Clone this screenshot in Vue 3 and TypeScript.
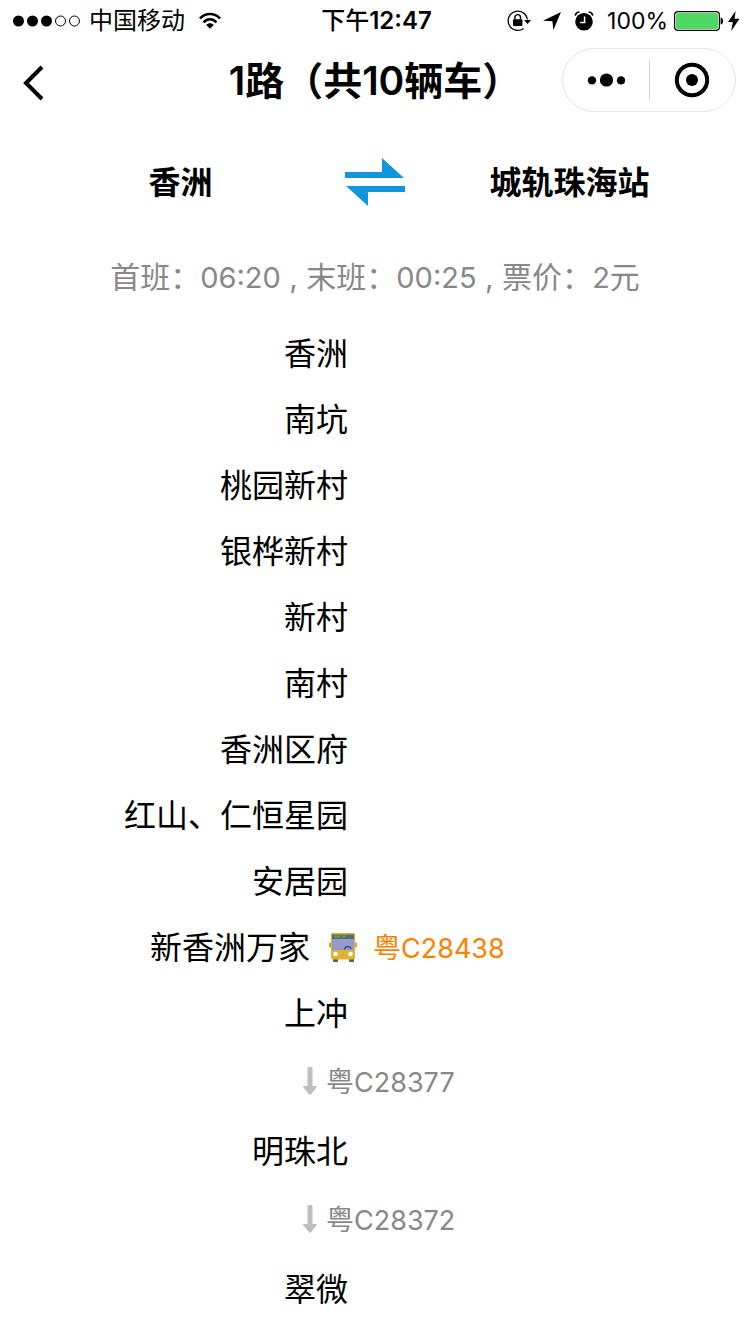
<script setup lang="ts">
import { ref } from 'vue'

interface Stop {
  name: string
  arrived?: string
  leaving?: string
}

const region = '粤'

const stops: Stop[] = [
  { name: '香洲' },
  { name: '南坑' },
  { name: '桃园新村' },
  { name: '银桦新村' },
  { name: '新村' },
  { name: '南村' },
  { name: '香洲区府' },
  { name: '红山、仁恒星园' },
  { name: '安居园' },
  { name: '新香洲万家', arrived: 'C28438' },
  { name: '上冲', leaving: 'C28377' },
  { name: '明珠北', leaving: 'C28372' },
  { name: '翠微' },
]

const from = ref('香洲')
const to = ref('城轨珠海站')

function swap() {
  const start = from.value
  from.value = to.value
  to.value = start
}
</script>

<template>
  <div class="page">
    <div class="status">
      <div class="status-side">
        <svg class="signal" width="68" height="12" viewBox="0 0 68 12" aria-hidden="true">
          <circle cx="5.5" cy="6" r="5.5" />
          <circle cx="19.5" cy="6" r="5.5" />
          <circle cx="33.5" cy="6" r="5.5" />
          <circle cx="47.5" cy="6" r="5" fill="none" stroke="#000" />
          <circle cx="61.5" cy="6" r="5" fill="none" stroke="#000" />
        </svg>
        <span class="carrier">中国移动</span>
        <svg class="wifi" width="24" height="18" viewBox="0 0 26 20" fill="none" stroke="#000" stroke-width="2.8" aria-hidden="true">
          <path d="M1.8 7.2 C8 .4 18 .4 24.2 7.2" />
          <path d="M5.8 11.4 C10 7 16 7 20.2 11.4" />
          <path d="M13 18.6 L8.8 14.4 C11.2 12 14.8 12 17.2 14.4 Z" fill="#000" stroke="none" />
        </svg>
      </div>
      <span class="time">下午<b>12:47</b></span>
      <div class="status-side status-right">
        <svg width="24" height="22" viewBox="0 0 24 22" aria-hidden="true">
          <path d="M16.6 18.4 A9.6 9.6 0 1 1 20.3 9.5" fill="none" stroke="#000" stroke-width="1.3" />
          <path d="M17 10 H24 L20.5 14 Z" />
          <rect x="6" y="9.2" width="9.4" height="6.8" rx="1" />
          <path d="M7.9 9.5 V7.4 a2.8 2.8 0 0 1 5.6 0 V9.5" fill="none" stroke="#000" stroke-width="1.4" />
        </svg>
        <svg class="location" width="18" height="18" viewBox="0 0 18 18" aria-hidden="true">
          <path d="M18 0 L10.4 18 L9.4 9.2 L0 8.8 Z" />
        </svg>
        <svg class="alarm" width="20" height="20" viewBox="0 0 20 20" aria-hidden="true">
          <circle cx="10" cy="10.8" r="8.8" />
          <path d="M1.2 4.6 C1.6 2.4 3.2 1.2 5.4 1 M18.8 4.6 C18.4 2.4 16.8 1.2 14.6 1" fill="none" stroke="#000" stroke-width="1.6" />
          <path d="M10.6 5.6 V11.4 H6.2" fill="none" stroke="#fff" stroke-width="1.5" />
        </svg>
        <span class="percent">100%</span>
        <svg class="battery" width="50" height="20" viewBox="0 0 50 20" aria-hidden="true">
          <rect x=".6" y=".6" width="44.8" height="18.8" rx="3.4" fill="#fff" stroke="#000" stroke-width="1.2" />
          <rect x="2" y="2" width="42" height="16" rx="2" fill="#4cd964" />
          <path d="M46.6 6.4 C50 7 50 13 46.6 13.6 Z" />
        </svg>
        <svg class="bolt" width="12" height="20" viewBox="0 0 12 20" aria-hidden="true">
          <path d="M7.6 0 L0 11 H4.8 L3.2 20 L11.6 7.8 H6.6 Z" />
        </svg>
      </div>
    </div>

    <header class="nav">
      <button class="back" type="button" aria-label="返回">
        <svg width="22" height="36" viewBox="0 0 22 36" fill="none" stroke="#000" stroke-width="4">
          <path d="M19 2 L3 18 L19 34" />
        </svg>
      </button>
      <h1>1路（共10辆车）</h1>
      <div class="capsule">
        <button type="button" aria-label="更多">
          <svg width="38" height="14" viewBox="0 0 38 14">
            <circle cx="5" cy="7.4" r="4.2" />
            <circle cx="19.5" cy="7" r="6.6" />
            <circle cx="34" cy="7.4" r="4.2" />
          </svg>
        </button>
        <button type="button" aria-label="关闭">
          <svg width="36" height="36" viewBox="0 0 36 36">
            <circle cx="18" cy="18" r="15.2" fill="none" stroke="#000" stroke-width="4" />
            <circle cx="18" cy="18" r="6" />
          </svg>
        </button>
      </div>
    </header>

    <main>
      <section class="route">
        <strong>{{ from }}</strong>
        <button class="swap" type="button" aria-label="换向" @click="swap">
          <svg width="60" height="48" viewBox="0 0 60 48" fill="#1296db">
            <path d="M0 14 H37 V0 L59 20 H0 Z" />
            <path d="M60 28 H1 L23 48 V34 H60 Z" />
          </svg>
        </button>
        <strong>{{ to }}</strong>
      </section>

      <p class="info">首班：<span>06:20</span> , 末班：<span>00:25</span> , 票价：<span>2</span>元</p>

      <ul class="stops">
        <li v-for="stop in stops" :key="stop.name">
          <div class="stop" :class="{ arrived: stop.arrived }">
            <span class="name">{{ stop.name }}</span>
            <template v-if="stop.arrived">
              <svg class="bus" width="28" height="30" viewBox="0 0 28 30" aria-hidden="true">
                <rect x="4" y="24" width="5" height="5" rx="1" fill="#47606b" />
                <rect x="20" y="24" width="5" height="5" rx="1" fill="#47606b" />
                <path d="M0 9.5 H28 V13 a1.5 1.5 0 0 1-1.5 1.5 H1.5 A1.5 1.5 0 0 1 0 13 Z" fill="#dba52f" />
                <path d="M3 0 H25 a1 1 0 0 1 1 1 V24.5 a2 2 0 0 1-2 2 H4 a2 2 0 0 1-2-2 V1 a1 1 0 0 1 1-1 Z" fill="#e3b132" />
                <rect x="3" y="1.5" width="22" height="4.5" fill="#56696f" />
                <path d="M5 3.5 H11.5 M13 3.5 H17" stroke="#59a846" stroke-width="2" />
                <rect x="3" y="6" width="22" height="11" fill="#949bca" />
                <path d="M15.5 16.5 C16 12.5 21 12.5 22 16" fill="none" stroke="#3f4c8f" stroke-width="1.5" />
                <circle cx="6.5" cy="21" r="2.3" fill="#fff" />
                <circle cx="21.5" cy="21" r="2.3" fill="#fff" />
              </svg>
              <span class="plate">{{ region }}<span>{{ stop.arrived }}</span></span>
            </template>
          </div>
          <div v-if="stop.leaving" class="moving">
            <svg width="14" height="28" viewBox="0 0 14 28" fill="#bfbfbf" aria-hidden="true">
              <path d="M4.5 1 a1 1 0 0 1 1-1 H8.5 a1 1 0 0 1 1 1 V19 H13 q1.5 .2 .6 1.6 L8 27.3 q-1 1-2 0 L.4 20.6 Q-.5 19.2 1 19 H4.5 Z" />
            </svg>
            <span class="plate">{{ region }}<span>{{ stop.leaving }}</span></span>
          </div>
        </li>
      </ul>
    </main>
  </div>
</template>

<style>
body {
  margin: 0;
  background: #fff;
}
</style>

<style scoped>
.page {
  font-family: Inter, "Noto Sans CJK SC", sans-serif;
  color: #000;
}

svg {
  display: block;
  flex: none;
}

button {
  display: flex;
  align-items: center;
  justify-content: center;
  padding: 0;
  border: 0;
  background: none;
}

.status {
  display: grid;
  grid-template-columns: 1fr auto 1fr;
  align-items: center;
  height: 40px;
  padding: 0 10px 0 13px;
  font-size: 24px;
  line-height: 42px;
}

.status-side {
  display: flex;
  align-items: center;
}

.status-right {
  justify-content: flex-end;
}

.carrier {
  margin: 0 13px 0 8px;
}

.time {
  font-weight: 500;
}

.time b {
  font-weight: 600;
}

.location {
  margin-left: 12px;
}

.alarm {
  margin: 0 13px;
}

.percent {
  font-size: 23px;
}

.battery {
  margin: 0 4px 0 6px;
}

.nav {
  display: grid;
  grid-template-columns: 174px 1fr 174px;
  align-items: center;
  height: 80px;
  padding: 0 14px;
}

.back {
  width: 40px;
  height: 64px;
  padding-top: 6px;
}

h1 {
  margin: 0;
  padding-top: 2px;
  font-size: 39px;
  line-height: 48px;
  font-weight: 600;
  text-align: center;
  white-space: nowrap;
}

.capsule {
  display: flex;
  align-items: center;
  height: 64px;
  box-sizing: border-box;
  border: 1px solid #e5e5e5;
  border-radius: 32px;
}

.capsule button {
  flex: 1;
  height: 38px;
}

.capsule button + button {
  border-left: 1px solid #ccc;
}

.route {
  display: grid;
  grid-template-columns: 1fr 60px 1fr;
  align-items: center;
  height: 124px;
  padding: 0 16px;
  text-align: center;
  font-size: 32px;
}

.route strong {
  padding-bottom: 4px;
  font-weight: 700;
}

.info {
  margin: 0;
  padding: 12px 0 22px;
  font-size: 30px;
  line-height: 43px;
  color: #888;
  text-align: center;
}

.info span {
  font-size: 29px;
}

.stops {
  margin: 0;
  padding: 0;
  list-style: none;
}

.stop {
  display: flex;
  align-items: center;
  height: 66px;
  font-size: 32px;
}

.name {
  width: calc(50% - 27px);
  padding-bottom: 6px;
  text-align: right;
}

.arrived .name {
  width: calc(50% - 65px);
}

.bus {
  margin: 0 16px 0 19px;
}

.plate {
  padding-bottom: 4px;
  font-size: 28px;
}

.plate span {
  font-size: 27px;
}

.arrived .plate {
  color: #ff7f00;
}

.moving {
  display: flex;
  align-items: center;
  gap: 9px;
  height: 68px;
  padding: 0 0 4px calc(50% - 72px);
  color: #888;
}

.moving .plate {
  padding-bottom: 2px;
}
</style>
